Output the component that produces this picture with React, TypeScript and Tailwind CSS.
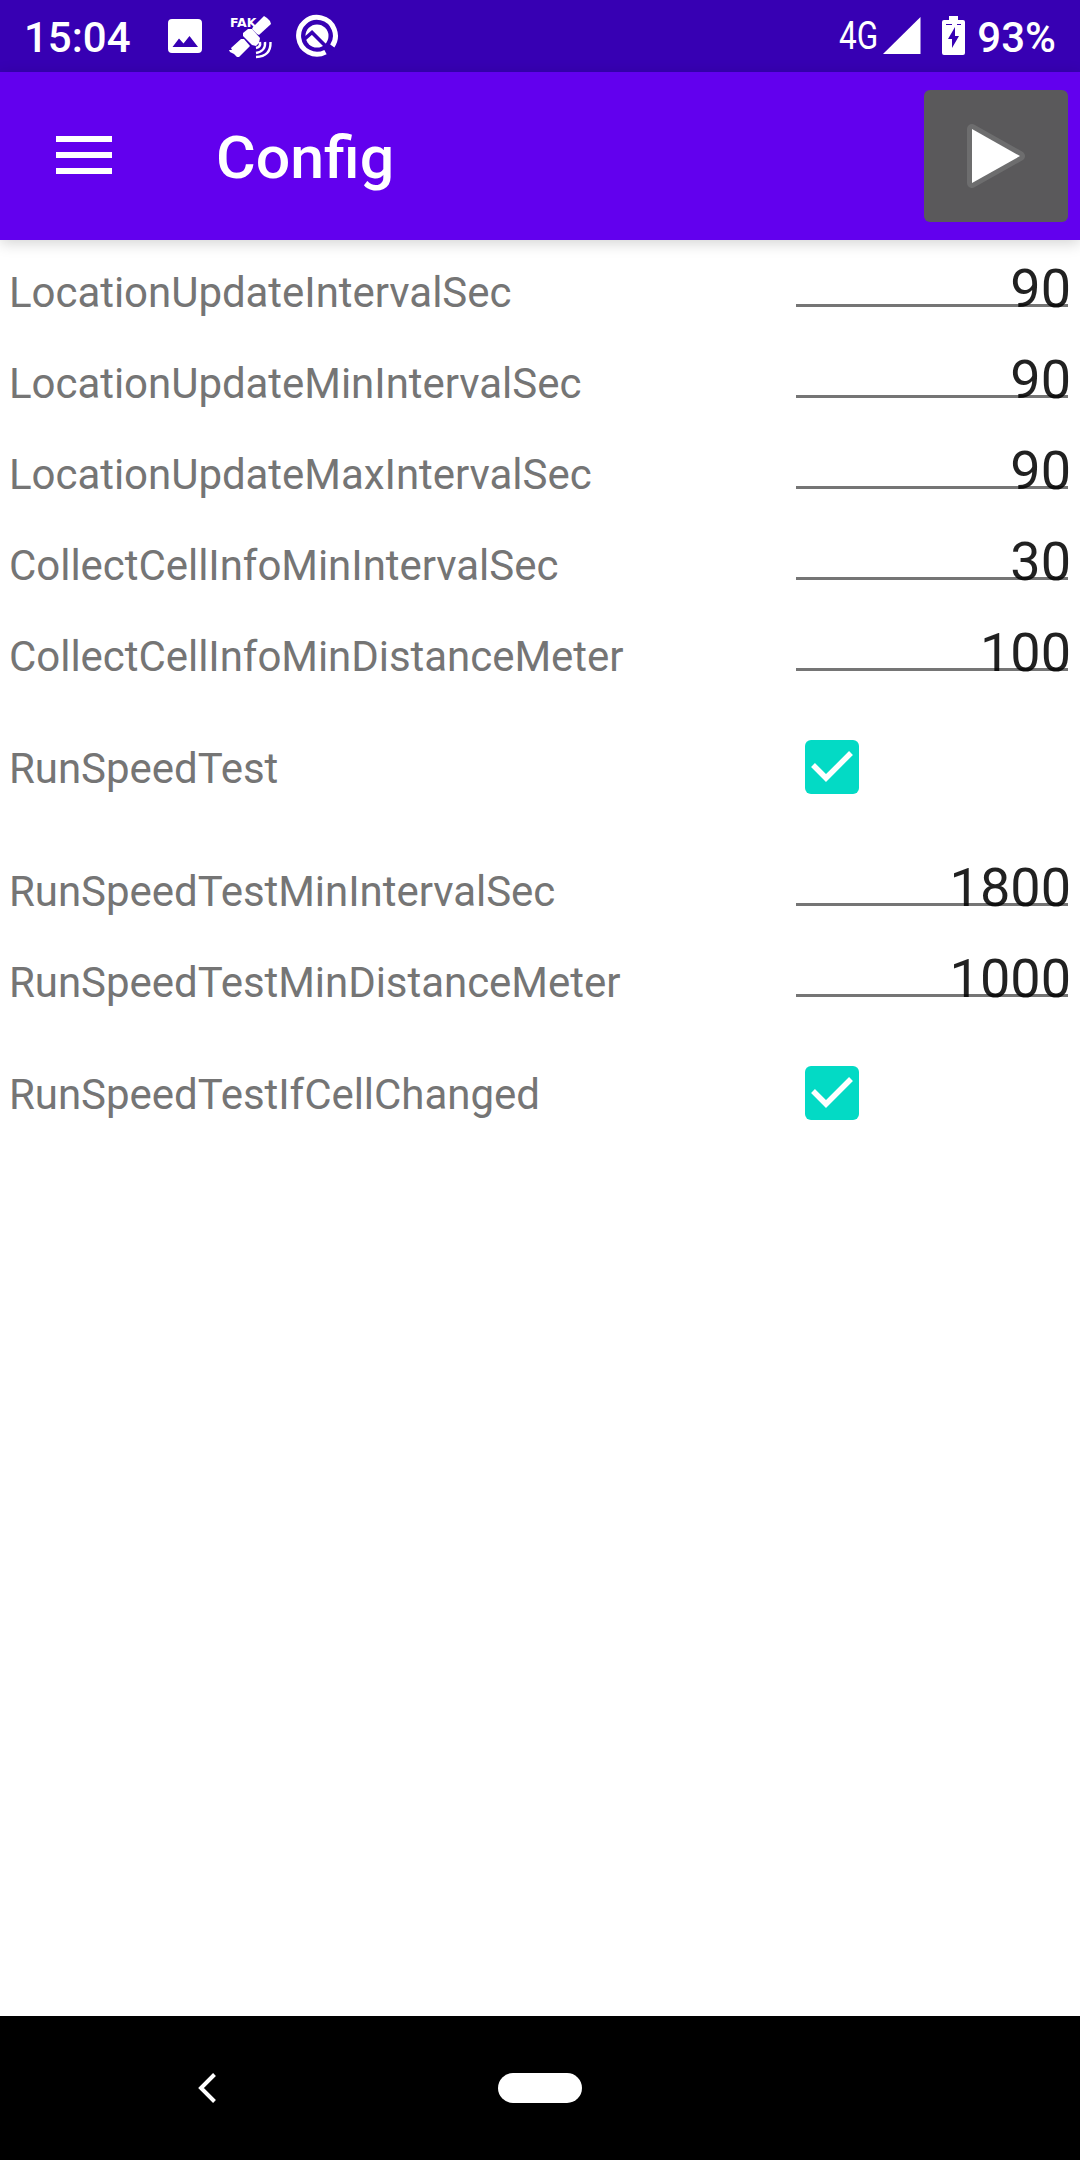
import React from "react";

type Row = { label: string; value?: string };

const rows: Row[] = [
  { label: "LocationUpdateIntervalSec", value: "90" },
  { label: "LocationUpdateMinIntervalSec", value: "90" },
  { label: "LocationUpdateMaxIntervalSec", value: "90" },
  { label: "CollectCellInfoMinIntervalSec", value: "30" },
  { label: "CollectCellInfoMinDistanceMeter", value: "100" },
  { label: "RunSpeedTest" },
  { label: "RunSpeedTestMinIntervalSec", value: "1800" },
  { label: "RunSpeedTestMinDistanceMeter", value: "1000" },
  { label: "RunSpeedTestIfCellChanged" },
];

function ImageIcon() {
  return (
    <svg className="ml-[37px] mt-[19px] h-[34px] w-[34px]" viewBox="0 0 34 34" fill="#fff">
      <path fillRule="evenodd" d="M4 0H30Q34 0 34 4V30Q34 34 30 34H4Q0 34 0 30V4Q0 0 4 0ZM4.5 28H30L21.5 17L15.5 24.5L11 19.5Z" />
    </svg>
  );
}

function SatelliteIcon() {
  return (
    <svg className="ml-[26px] mt-[15px] h-[44px] w-[46px] overflow-visible" viewBox="0 0 46 44" fill="#fff">
      <text x="2" y="12" fontFamily="DejaVu Sans, sans-serif" fontWeight="700" fontSize="12.5">FAK</text>
      <path d="M36 1L39 3L42 6L43 9L31 20L29 19L24 14L25 12Z" />
      <path d="M20 14L24 14L32 23L31 28L28 31L24 30L15 21L15 18Z" />
      <path d="M13 24L16 24L22 31L11 42H9L6 39L2 37L1 35H4L3 33Z" />
      <path d="M32 27Q33 32 28 33M37 27Q38 36 28 38M42.5 27Q43 41.5 28 42" fill="none" stroke="#fff" strokeWidth="2.4" />
    </svg>
  );
}

function QIcon() {
  return (
    <svg className="ml-[21px] mt-[14px] h-[44px] w-[44px]" viewBox="0 0 44 44">
      <path d="M30.5 38.1A18.4 18.4 0 1 1 37.3 32" fill="none" stroke="#fff" strokeWidth="5" />
      <circle cx="22" cy="22" r="11.5" fill="#fff" />
      <path d="M9 25.5L17 18.5L35.5 37" fill="none" stroke="#3700b3" strokeWidth="3.6" />
    </svg>
  );
}

function StatusBar() {
  return (
    <div className="flex h-[72px] bg-[#3700b3] text-white">
      <span className="ml-[24px] mt-[13px] w-[107px] text-[42px] leading-[49px] font-medium">15:04</span>
      <ImageIcon />
      <SatelliteIcon />
      <QIcon />
      <div className="ml-auto flex">
        <span className="mt-[14px] w-[44px] origin-left scale-x-[0.83] text-[38px] leading-[44px]">4G</span>
        <svg className="mt-[17px] h-[37px] w-[38px]" viewBox="0 0 38 37"><path d="M37.5 0V37H0Z" fill="#fff" /></svg>
        <svg className="ml-[21px] mt-[16px] h-[39px] w-[23px]" viewBox="0 0 23 39">
          <path fillRule="evenodd" fill="#fff" d="M7 0H16V4H21Q23 4 23 6V37Q23 39 21 39H2Q0 39 0 37V6Q0 4 2 4H7ZM13 11L6 23H10V32L17 20H13Z" />
          <path d="M4 8.5H10M15 8.5H19" stroke="#3700b3" strokeWidth="1" />
        </svg>
        <span className="ml-[12px] mr-[24px] mt-[13px] text-[42px] leading-[49px] font-medium">93%</span>
      </div>
    </div>
  );
}

function Checkbox() {
  return (
    <svg role="checkbox" aria-checked="true" className="ml-[9px] mt-[45px] h-[54px] w-[54px]" viewBox="0 0 54 54">
      <rect width="54" height="54" rx="6" fill="#03dac5" />
      <path d="M8 25L21 38L46 13" fill="none" stroke="#fff" strokeWidth="5.5" />
    </svg>
  );
}

export default function App() {
  return (
    <div className="flex h-[2160px] w-[1080px] flex-col overflow-hidden bg-white font-['Roboto',sans-serif]">
      <StatusBar />
      <header className="relative flex h-[168px] shrink-0 bg-[#6200ee] text-white shadow-[0_3px_14px_rgba(0,0,0,0.18)]">
        <button className="ml-[56px] mt-[64px] flex h-[38px] w-[56px] flex-col justify-between">
          <span className="h-[6px] w-full bg-white" />
          <span className="h-[6px] w-full bg-white" />
          <span className="h-[6px] w-full bg-white" />
        </button>
        <h1 className="ml-[104px] mt-[51px] origin-left scale-x-[1.014] text-[60px] leading-[70px] font-medium">Config</h1>
        <button className="ml-auto mr-[12px] mt-[18px] h-[132px] w-[144px] rounded-[6px] bg-[#5a595b]">
          <svg className="h-[132px] w-[144px]" viewBox="0 0 144 132">
            <path d="M48 39L96 66L48 93Z" fill="#6d6d6e" stroke="#6d6d6e" strokeWidth="10" strokeLinejoin="round" />
            <path d="M48 39L96 66L48 93Z" fill="#fff" />
          </svg>
        </button>
      </header>
      <main className="flex flex-1 flex-col">
        {rows.map((row) =>
          row.value ? (
            <div key={row.label} className="flex h-[91px]">
              <label className="ml-[9px] mt-[28px] w-[787px] text-[42px] leading-[49px] tracking-[-0.04px] text-[#757575]">{row.label}</label>
              <div className="h-[67px] w-[272px] border-b-[3px] border-[#757575]">
                <div className="-mr-[3px] mt-[17px] text-right text-[54px] leading-[63px] text-black/87">{row.value}</div>
              </div>
            </div>
          ) : (
            <div key={row.label} className="flex h-[144px]">
              <label className="ml-[9px] mt-[49px] w-[787px] text-[42px] leading-[49px] tracking-[-0.04px] text-[#757575]">{row.label}</label>
              <Checkbox />
            </div>
          ),
        )}
      </main>
      <nav className="flex h-[144px] bg-black">
        <svg className="ml-[198px] mt-[57px] h-[30px] w-[18px]" viewBox="0 0 18 30">
          <path d="M16.5 1.5L3 15L16.5 28.5" fill="none" stroke="#fff" strokeWidth="4" />
        </svg>
        <div className="ml-[282px] mt-[57px] h-[30px] w-[84px] rounded-full bg-white" />
      </nav>
    </div>
  );
}
